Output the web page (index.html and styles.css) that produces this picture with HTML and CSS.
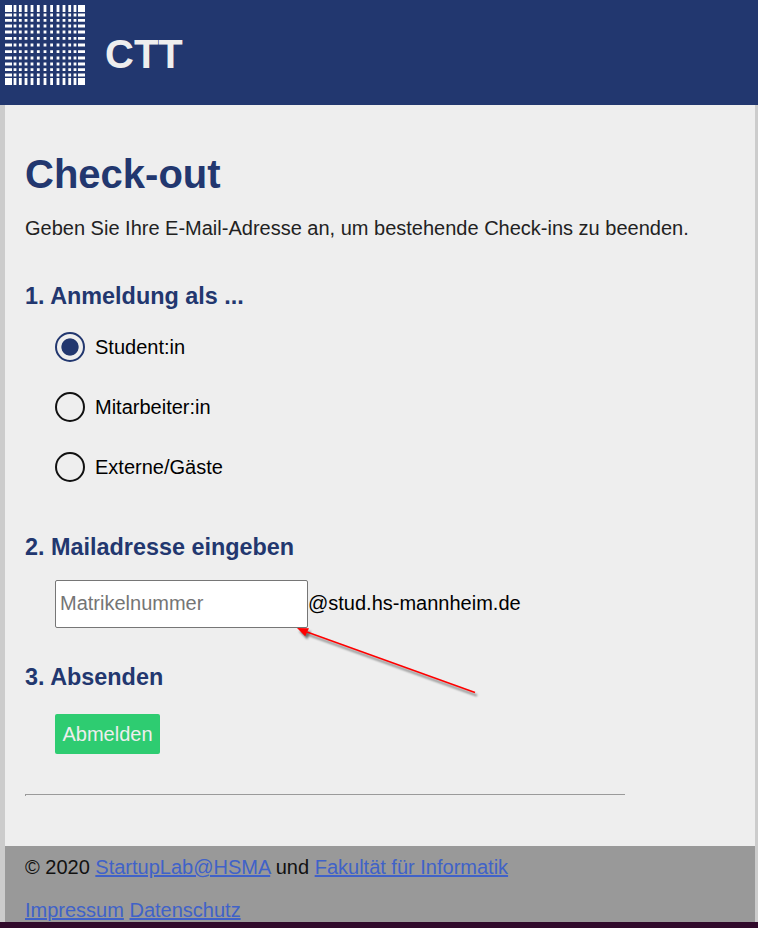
FILE: index.html
```html
<!DOCTYPE html>
<html lang="de">
<head>
<meta charset="utf-8">
<title>CTT</title>
<link rel="stylesheet" href="styles.css">
</head>
<body>
<header class="header">
  <svg class="logo" viewBox="0 0 80 80" width="80" height="80" aria-hidden="true">
    <defs>
      <path id="stripes" fill="#fff" d="M0 0h7v80h-7zM8.6 0h2.8v80h-2.8zM13.9 0h2.8v80h-2.8zM19.6 0h2.8v80h-2.8zM25.6 0h2.8v80h-2.8zM31.9 0h2.8v80h-2.8zM38.6 0h2.8v80h-2.8zM45.2 0h2.8v80h-2.8zM51.6 0h2.8v80h-2.8zM57.6 0h2.8v80h-2.8zM63.3 0h2.8v80h-2.8zM68.6 0h2.8v80h-2.8zM73 0h7v80h-7z"/>
      <mask id="columns" maskUnits="userSpaceOnUse" x="0" y="0" width="80" height="80"><use href="#stripes"/></mask>
    </defs>
    <g mask="url(#columns)"><use href="#stripes" transform="matrix(0 1 1 0 0 0)"/></g>
  </svg>
  <h1 class="brand">CTT</h1>
</header>
<main class="content">
  <h1 class="title">Check-out</h1>
  <p class="intro">Geben Sie Ihre E-Mail-Adresse an, um bestehende Check-ins zu beenden.</p>
  <form>
    <h2 class="step">1. Anmeldung als ...</h2>
    <div class="options">
      <label class="option"><input class="radio" type="radio" name="role" checked>Student:in</label>
      <label class="option"><input class="radio" type="radio" name="role">Mitarbeiter:in</label>
      <label class="option"><input class="radio" type="radio" name="role">Externe/Gäste</label>
    </div>
    <h2 class="step step-mail">2. Mailadresse eingeben</h2>
    <div class="mail">
      <input class="field" type="text" placeholder="Matrikelnummer"><span class="domain">@stud.hs-mannheim.de</span>
      <svg class="arrow" viewBox="0 0 190 76" width="190" height="76" aria-hidden="true">
        <g fill="none" stroke="#f00"><path d="M12 5L180 65.5" stroke-width="1.5"/><path d="M2 1L14 1.3L10.2 9.3Z" fill="#f00" stroke="none"/></g>
      </svg>
    </div>
    <h2 class="step step-send">3. Absenden</h2>
    <button class="submit" type="button">Abmelden</button>
  </form>
  <hr class="rule">
</main>
<footer class="footer">
  <p class="line">© 2020 <a href="#">StartupLab@HSMA</a> und <a href="#">Fakultät für Informatik</a></p>
  <p class="line"><a href="#">Impressum</a> <a href="#">Datenschutz</a></p>
</footer>
<div class="desktop"></div>
</body>
</html>
```
FILE: styles.css
```css
* { box-sizing: border-box; }
body {
  margin: 0;
  height: 928px;
  overflow: hidden;
  display: flex;
  flex-direction: column;
  background: #ccc;
  color: #000;
  font: 20px/30px "Liberation Sans", Arial, sans-serif;
}
h1, h2, p { margin: 0; }
.header {
  display: flex;
  flex: none;
  gap: 20px;
  height: 105px;
  padding: 5px;
  background: #22376f;
}
.logo { flex: none; }
.brand { margin-top: 19px; color: #eee; font-size: 40px; line-height: 60px; }
.content {
  flex: none;
  height: 741px;
  margin: 0 3px 0 5px;
  padding: 39px 20px 0;
  background: #eee;
}
.title { color: #22376f; font-size: 40px; line-height: 60px; }
.intro { margin-top: 9px; color: #222; }
.step { margin-top: 38px; color: #22376f; font-size: 23.4px; line-height: 30px; }
.options { display: flex; flex-direction: column; gap: 30px; margin: 21px 0 0 30px; }
.option { display: flex; align-items: center; gap: 10px; height: 30px; }
.radio {
  appearance: none;
  width: 30px;
  height: 30px;
  margin: 0;
  border: 2px solid #111;
  border-radius: 50%;
}
.radio:checked { border-color: #22376f; background: radial-gradient(circle, #22376f 8.2px, transparent 9px); }
.step-mail { margin-top: 50px; }
.mail { position: relative; display: flex; align-items: center; height: 48px; margin: 18px 0 0 30px; }
.field {
  width: 253px;
  height: 48px;
  padding: 0 4px 2px;
  border: 1px solid #767676;
  border-radius: 2px;
  background: #fff;
  font: inherit;
}
.field::placeholder { color: #757575; }
.domain { padding-bottom: 2px; }
.arrow { position: absolute; left: 240px; top: 47px; filter: drop-shadow(2px 3px 1px #0008); }
.step-send { margin-top: 34px; }
.submit {
  display: block;
  width: 105px;
  height: 40px;
  margin: 22px 0 0 30px;
  padding: 0;
  border: 0;
  border-radius: 2px;
  background: #2ecc71;
  color: #eee;
  font: inherit;
}
.rule { width: 600px; height: 2px; margin: 40px 0 0; border: solid #9a9a9a; border-width: 1px 0 0 1px; }
.footer { flex: none; height: 76px; margin: 0 3px 0 5px; padding: 6px 20px 0; background: #999; color: #111; }
.line { height: 43px; white-space: nowrap; }
.footer a { color: #4062c8; }
.desktop { flex: none; height: 6px; background: #300a2b; }
```
